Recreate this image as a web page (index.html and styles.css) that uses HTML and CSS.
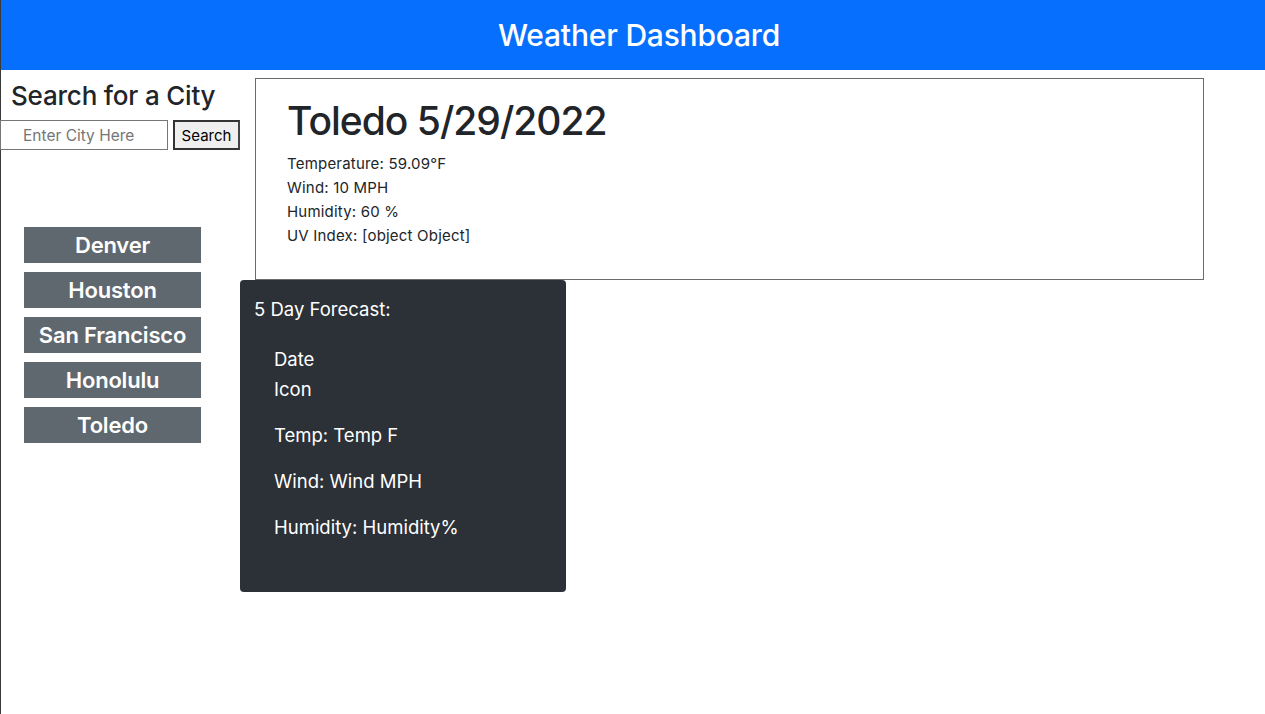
FILE: index.html
```html
<!DOCTYPE html>
<html lang="en">
<head>
<meta charset="utf-8">
<title>Weather Dashboard</title>
<link rel="stylesheet" href="styles.css">
</head>
<body>
<div class="page">
  <header class="topbar">
    <h1 class="title">Weather Dashboard</h1>
  </header>
  <div class="layout">
    <aside class="sidebar">
      <h2 class="search-title">Search for a City</h2>
      <form class="search-form">
        <input class="search-input" type="text" placeholder="Enter City Here">
        <button class="search-btn" type="button">Search</button>
      </form>
      <div class="history">
        <button class="city-btn" type="button">Denver</button>
        <button class="city-btn" type="button">Houston</button>
        <button class="city-btn" type="button">San Francisco</button>
        <button class="city-btn" type="button">Honolulu</button>
        <button class="city-btn" type="button">Toledo</button>
      </div>
    </aside>
    <main class="main">
      <section class="current">
        <h2 class="city-date">Toledo 5/29/2022</h2>
        <p class="stat">Temperature: 59.09°F</p>
        <p class="stat">Wind: 10 MPH</p>
        <p class="stat">Humidity: 60 %</p>
        <p class="stat">UV Index: [object Object]</p>
      </section>
      <section class="forecast">
        <h3 class="forecast-title">5 Day Forecast:</h3>
        <div class="day">
          <p class="day-line">Date</p>
          <p class="day-line">Icon</p>
          <p class="day-line spaced">Temp: Temp F</p>
          <p class="day-line spaced">Wind: Wind MPH</p>
          <p class="day-line spaced">Humidity: Humidity%</p>
        </div>
      </section>
    </main>
  </div>
</div>
</body>
</html>
```
FILE: styles.css
```css
* { box-sizing: border-box; }
html, body { margin: 0; padding: 0; }
body {
  font-family: Inter, "Noto Sans", "Liberation Sans", sans-serif;
  color: #212529;
  background: #fff;
}
.page {
  border-left: 1px solid #3a3a3a;
  min-height: 714px;
}
.topbar {
  background: #066ffd;
  height: 70px;
  display: flex;
  align-items: center;
  justify-content: center;
  padding-left: 12px;
}
.title {
  margin: 0;
  color: #fff;
  font-size: 30px;
  font-weight: 500;
  letter-spacing: -0.2px;
}
.layout {
  display: flex;
}
.sidebar {
  width: 239px;
  flex: none;
}
.search-title {
  margin: 10px 0 0 10px;
  font-size: 26px;
  font-weight: 500;
  line-height: 32px;
  letter-spacing: -0.2px;
}
.search-form {
  display: flex;
  gap: 5px;
  margin-top: 8px;
}
.search-input {
  width: 168px;
  height: 30px;
  margin-left: -1px;
  border: 1px solid #767676;
  font-family: inherit;
  font-size: 15.5px;
  text-align: left;
  padding: 0 0 0 22px;
}
.search-input::placeholder { color: #757575; }
.search-btn {
  width: 67px;
  height: 30px;
  background: #efefef;
  border: 2px solid #333;
  border-right-color: #444;
  font-family: inherit;
  font-size: 15px;
  color: #000;
  padding: 0;
}
.history {
  display: flex;
  flex-direction: column;
  gap: 9px;
  margin: 77px 0 0 23px;
}
.city-btn {
  width: 177px;
  height: 36px;
  background: #5f686f;
  color: #fff;
  border: none;
  border-radius: 0;
  font-family: inherit;
  font-size: 22px;
  font-weight: 600;
  padding: 0;
  letter-spacing: -0.2px;
}
.main {
  flex: 1;
}
.current {
  margin: 8px 61px 0 15px;
  height: 202px;
  border: 1px solid #6b6b6b;
  padding: 18px 31px;
}
.city-date {
  margin: 0 0 7px;
  font-size: 39px;
  font-weight: 500;
  line-height: 48px;
  letter-spacing: -1px;
}
.stat {
  margin: 0;
  font-size: 15px;
  line-height: 24px;
  letter-spacing: 0.2px;
}
.forecast {
  width: 326px;
  height: 312px;
  background: #2c3037;
  color: #fff;
  border-radius: 4px;
  padding: 16px 14px;
}
.forecast-title {
  margin: 0;
  font-size: 18.5px;
  font-weight: 400;
  line-height: 26px;
}
.day {
  padding: 22px 0 0 20px;
}
.day-line {
  margin: 0;
  font-size: 18.5px;
  line-height: 30px;
}
.day-line.spaced {
  margin-top: 16px;
}
```
